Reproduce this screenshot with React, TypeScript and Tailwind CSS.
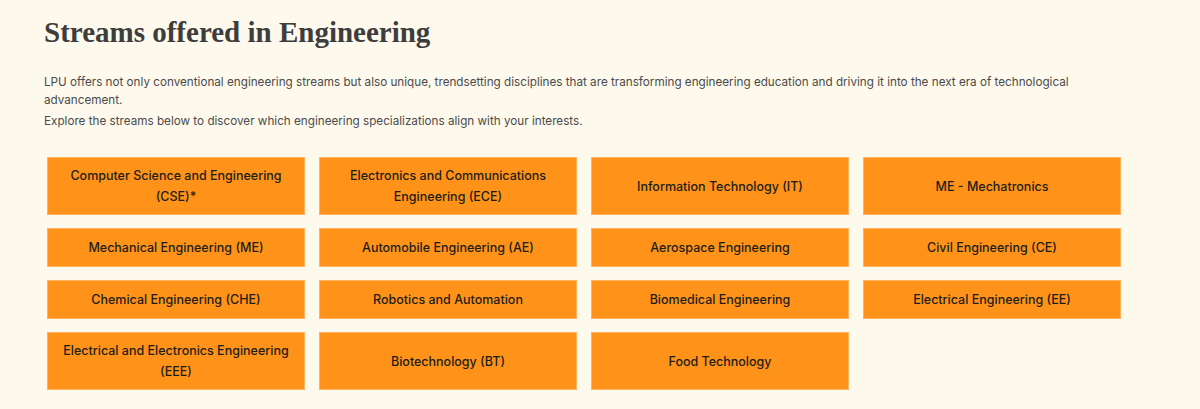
const streams: string[] = [
  "Computer Science and Engineering (CSE)*",
  "Electronics and Communications Engineering (ECE)",
  "Information Technology (IT)",
  "ME - Mechatronics",
  "Mechanical Engineering (ME)",
  "Automobile Engineering (AE)",
  "Aerospace Engineering",
  "Civil Engineering (CE)",
  "Chemical Engineering (CHE)",
  "Robotics and Automation",
  "Biomedical Engineering",
  "Electrical Engineering (EE)",
  "Electrical and Electronics Engineering (EEE)",
  "Biotechnology (BT)",
  "Food Technology",
];

export default function App() {
  return (
    <div className="min-h-[409px] w-full bg-[#fef9ed] px-[44px] pt-[12px] font-['Inter',sans-serif]">
      {/* Heading */}
      <h2 className="text-[29px] font-bold leading-[40px] text-[#3d3d3d] font-['Liberation_Serif',serif]">
        Streams offered in Engineering
      </h2>

      {/* Intro copy */}
      <div className="mt-[21px] max-w-[1080px] text-[11.7px] leading-[18px] text-[#4b4b4b]">
        <p>
          LPU offers not only conventional engineering streams but also unique, trendsetting disciplines that are transforming
          engineering education and driving it into the next era of technological advancement.
        </p>
        <p className="mt-[3px]">
          Explore the streams below to discover which engineering specializations align with your interests.
        </p>
      </div>

      {/* Streams grid */}
      <div className="ml-[3px] mt-[27px] grid w-[1074px] grid-cols-4 gap-x-[14px] gap-y-[13px]">
        {streams.map((s) => (
          <div
            key={s}
            className="flex min-h-[39px] items-center justify-center border border-[#ffb35c] bg-[#ff931a] px-2 py-[7px] text-center text-[12.5px] font-medium leading-[21px] text-[#1d1d1d]"
          >
            {s}
          </div>
        ))}
      </div>
    </div>
  );
}
